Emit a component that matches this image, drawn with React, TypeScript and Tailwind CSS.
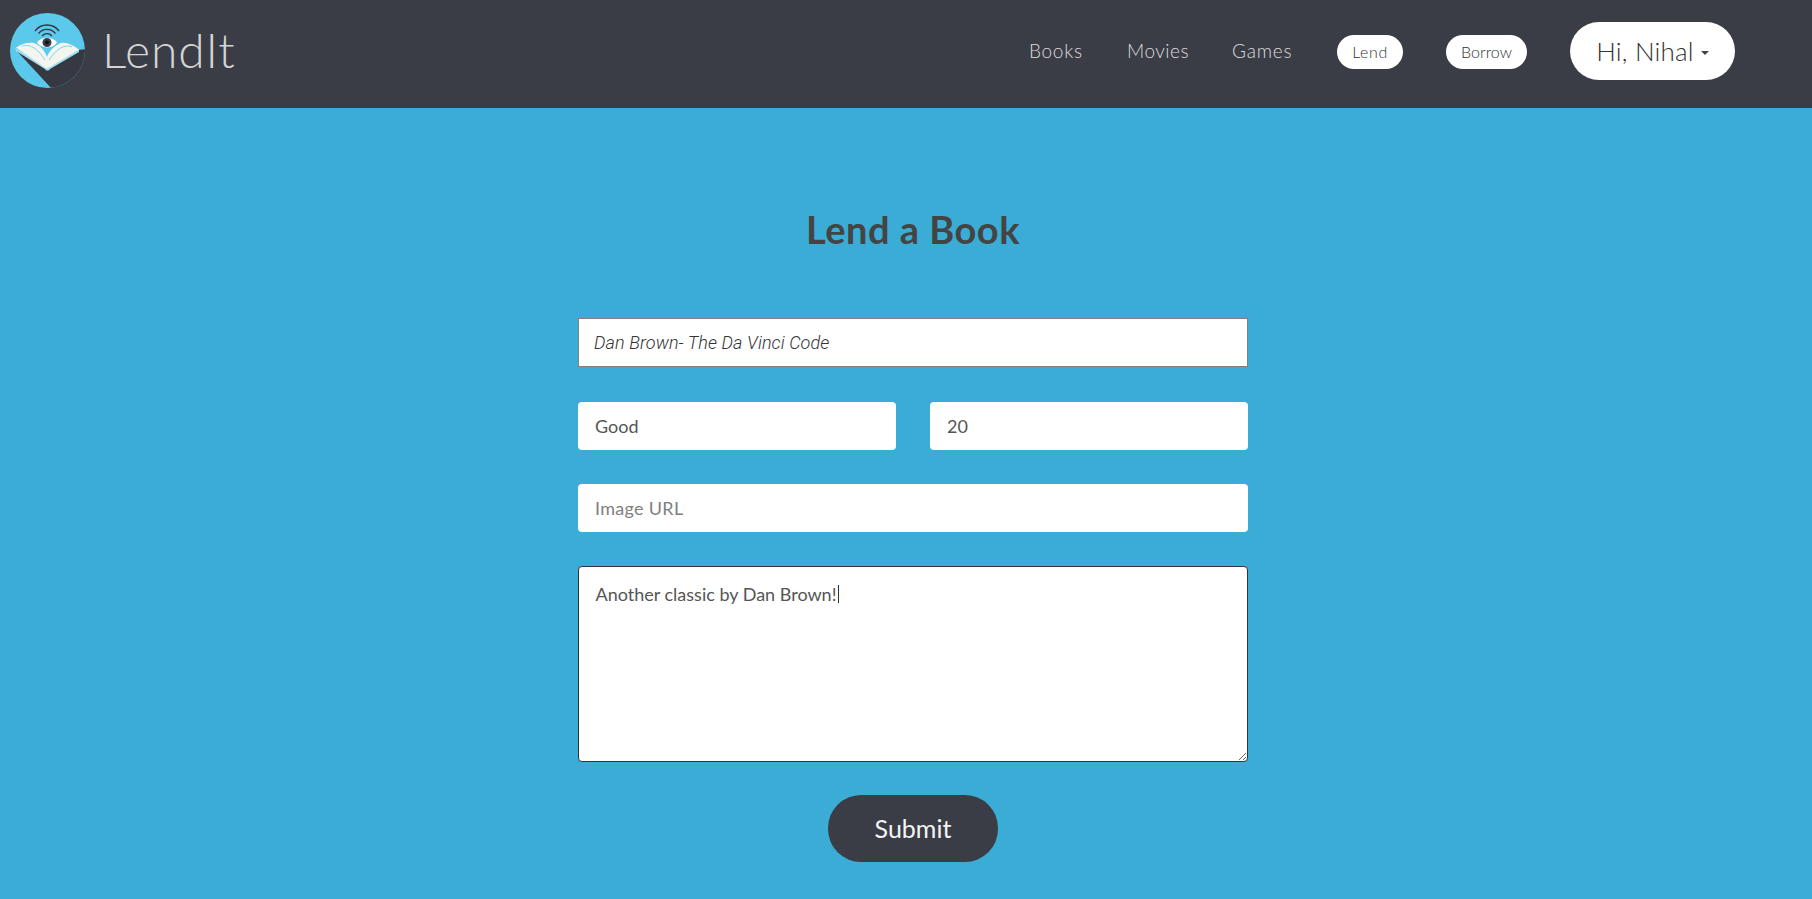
import React from 'react';

function Logo() {
    return (
        <svg width="78" height="78" viewBox="0 -1 78 78" className="shrink-0">
            <defs>
                <clipPath id="logo-circle">
                    <circle cx="38.500" cy="37.500" r="37.500" />
                </clipPath>
            </defs>
            <circle cx="38.500" cy="37.500" r="37.500" fill="#5bc9ec" />
            <path d="M6 36 L43 76 L80 76 L80 36 L69 37 L38 57 Z" fill="#363842" clipPath="url(#logo-circle)" />
            <path d="M6 35 L7 38 L36 56 C37 58 40 58 41 56 L70 39 L70 36 L38 52 Z" fill="#9fdff3" />
            <path d="M7 34.500 C13 30 20 29 25 30 C31 32 36 38 38 44 C40 38 46 32 52 30 C58 29 64 32 70 36.500 L41 54 C39 55.500 37 55.500 35 54 Z" fill="#f5f5f0" />
            <path d="M13 33 C20 31 28 34 36 47 M63 34 C56 31 48 35 40 47" stroke="#7fd3ec" strokeWidth="1" fill="none" />
            <path d="M28 29.500 C32 23 44 23 48 29.500 C44 36 32 36 28 29.500 Z" fill="#ffffff" />
            <circle cx="38" cy="29.500" r="4.500" fill="#3a3d47" />
            <circle cx="38" cy="29.500" r="2" fill="#111214" />
            <path d="M26 18 C32 10 44 10 50 18 M29.500 20.500 C34 15 42 15 46.500 20.500 M33 23 C36 20 40 20 43 23" stroke="#33353c" strokeWidth="1.300" fill="none" />
        </svg>
    );
}

export default function App() {
    return (
        <div className="min-h-[899px] bg-[#3bacd5] font-['Lato','Open_Sans',sans-serif]">
            {/* Navbar */}
            <nav className="h-[108px] bg-[#3a3d46] flex items-center pb-[6px] pl-[9px] pr-[77px]">
                <Logo />
                <span className="ml-[15px] mb-[2px] text-[48px] font-light text-[#d4d4d4] tracking-[1px] leading-none">LendIt</span>
                <div className="ml-auto flex items-center">
                    <a className="text-[19px] font-light tracking-[0.7px] text-[#dcdcdc] w-[54px] mr-[44px]">Books</a>
                    <a className="text-[19px] font-light tracking-[0.5px] text-[#dcdcdc] w-[62px] mr-[43px]">Movies</a>
                    <a className="text-[19px] font-light tracking-[0.8px] text-[#dcdcdc] w-[61px] mr-[44px]">Games</a>
                    <a className="mt-[2px] h-[34px] w-[66px] rounded-full bg-white text-[#333] text-[16px] tracking-[0.6px] font-light flex items-center justify-center mr-[43px]">Lend</a>
                    <a className="mt-[2px] h-[34px] w-[81px] rounded-full bg-white text-[#333] text-[16px] font-light flex items-center justify-center mr-[43px]">Borrow</a>
                    <button className="h-[58px] w-[165px] rounded-full bg-white text-[#333] text-[26px] tracking-[0.2px] font-light flex items-center justify-center">
                        Hi, Nihal
                        <span className="ml-[7px] mt-[3px] w-0 h-0 border-x-[4px] border-x-transparent border-t-[4px] border-t-[#444]"></span>
                    </button>
                </div>
            </nav>

            {/* Form */}
            <div className="flex justify-center pl-[14px]">
                <form className="w-[670px] flex flex-col">
                    <h1 className="mt-[100px] mb-[67px] h-[43px] leading-[43px] text-center text-[38px] tracking-[0.5px] font-bold text-[#444]">Lend a Book</h1>
                    <input
                        defaultValue="Dan Brown- The Da Vinci Code"
                        className="h-[49px] w-full bg-white border border-[#808080] px-[15px] text-[18px] tracking-[0.1px] italic font-light font-['Roboto',sans-serif] text-[#333] outline-none"
                    />
                    <div className="mt-[35px] flex justify-between">
                        <input defaultValue="Good" className="h-[48px] w-[318px] rounded-[4px] bg-white px-[17px] text-[18px] text-[#555] outline-none" />
                        <input defaultValue="20" className="h-[48px] w-[318px] rounded-[4px] bg-white px-[17px] text-[18px] text-[#555] outline-none" />
                    </div>
                    <input placeholder="Image URL" className="mt-[34px] h-[48px] w-full rounded-[4px] bg-white px-[17px] text-[18px] tracking-[0.3px] text-[#555] placeholder:text-[#808080] outline-none" />
                    <div className="relative mt-[34px] h-[196px]">
                        <textarea
                            defaultValue="Another classic by Dan Brown!"
                            className="block h-[196px] w-full rounded-[4px] bg-white border border-[#333] px-[16.500px] py-[15px] text-[18px] leading-[24px] text-[#555] outline-none"
                        />
                        {/* text caret */}
                        <span className="absolute left-[260px] top-[19px] h-[18px] w-px bg-[#333]"></span>
                    </div>
                    <button type="button" className="mt-[33px] mx-auto h-[67px] w-[170px] rounded-[33px] bg-[#3a3d46] text-[#f4f4f4] text-[25px] pt-[1px]">Submit</button>
                </form>
            </div>
        </div>
    );
}
